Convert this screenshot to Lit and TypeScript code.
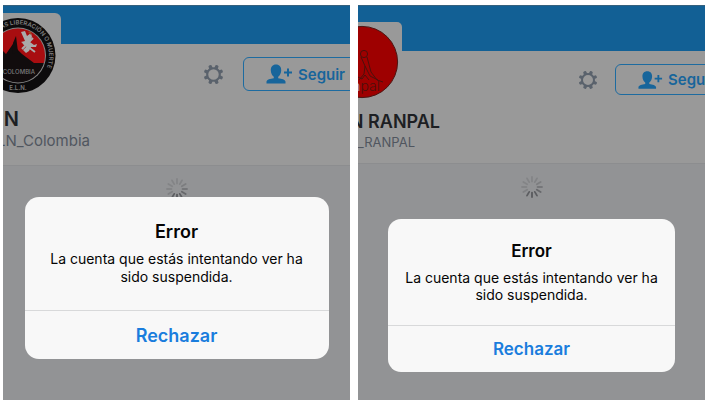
import { LitElement, html, svg, css } from "lit";
import { customElement, property } from "lit/decorators.js";

const gear = svg`
  <svg class="gear" viewBox="0 0 22 22" aria-hidden="true">
    <circle cx="11" cy="11" r="6.6" fill="none" stroke="currentColor" stroke-width="2.2"/>
    ${Array.from({ length: 8 }, (_, i) => svg`
      <path d="M9 4.8 L9.4 1 Q11 0.2 12.6 1 L13 4.8Z" fill="currentColor"
        transform=${`rotate(${i * 45 + 22.5} 11 11)`}/>`)}
  </svg>`;

const addPerson = svg`
  <svg class="person" viewBox="0 0 27 20" aria-hidden="true">
    <path fill="currentColor" d="M10 0.5C6.6 0.5 4.6 2.9 4.8 6.4C4.9 9.2 6.2 11.6 7.8 12.7V14.2C4.2 14.8 0.9 15.4 0.5 17.6V19.5H19.5V17.6C19.1 15.4 15.8 14.8 12.2 14.2V12.7C13.8 11.6 15.1 9.2 15.2 6.4C15.4 2.9 13.4 0.5 10 0.5Z"/>
    <path d="M18 8.5H26M22 4.5V12.5" fill="none" stroke="currentColor" stroke-width="2"/>
  </svg>`;

const shades = [0.2, 0.22, 0.3, 0.4, 0.6, 0.75, 0.8, 0.75, 0.25, 0.2, 0.2, 0.2];
const spinner = svg`
  <svg class="spinner" viewBox="0 0 24 24" aria-hidden="true">
    ${shades.map((o, i) => svg`
      <path d="M12 2V6.4" stroke="#4b4c50" stroke-width="1.8" stroke-linecap="round"
        opacity=${o} transform=${`rotate(${i * 30} 12 12)`}/>`)}
  </svg>`;

const emblem = svg`
  <svg class="logo" viewBox="0 0 58 84" role="img" aria-label="ELN Colombia">
    <defs>
      <clipPath id="disc"><circle cx="15" cy="42.5" r="27"/></clipPath>
      <path id="arc" d="M-7 20.5A31.1 31.1 0 1 1 15 73.6"/>
    </defs>
    <circle cx="15" cy="42.5" r="37.5" fill="#0c0b0c"/>
    <circle cx="15" cy="42.5" r="28" fill="#858585"/>
    <g clip-path="url(#disc)">
      <rect x="-15" y="10" width="60" height="40" fill="#a80d10"/>
      <path d="M-15 50L-2 36L3 41L12 28L14 36L19 41L31 50H45V75H-15Z" fill="#110c0d"/>
      <path d="M10 30L13 23L15 39L9 41Z" fill="#110c0d"/>
      <path d="M18 19L22 18L24 23L28 20L29 24L27 29L31 32L34 31L33 34L28 34L26 38L23 40L20 37L24 33L18 29L22 28Z" fill="#aaa"/>
      <path d="M30 25L19 36M20 30L32 39" stroke="#aaa" stroke-width="2"/>
      <path d="M25 19L28 18L28 22Z" fill="#9b4a20"/>
    </g>
    <text class="ring"><textPath href="#arc" startOffset="7">AS LIBERACIÓN O MUERTE</textPath></text>
    <text class="place" x="32" y="61" text-anchor="end">COLOMBIA</text>
    <text class="ring" x="15" y="77" text-anchor="middle">E.L.N.</text>
  </svg>`;

const redDisc = svg`
  <svg class="logo" viewBox="0 0 44 84" role="img" aria-label="Ranpal">
    <circle cx="4" cy="40" r="35.6" fill="#9e0000" stroke="#4c1512" stroke-width="1"/>
    <g fill="none" stroke="#4b100c" stroke-width="1">
      <circle cx="6" cy="32" r="3.6"/>
      <path d="M3 35L7 44L6 52L1 58M9 35L13 50L19 58L25 60M7 44L12 54L20 58M0 55L4 57L7 53L11 58"/>
    </g>
    <text x="22" y="69" class="mark" text-anchor="end"><tspan class="light">n</tspan>pal</text>
  </svg>`;

@customElement("profile-screen")
class ProfileScreen extends LitElement {
  @property() variant = "first";
  @property() name = "";
  @property() handle = "";

  static styles = css`
    :host { display: block; min-width: 0; }
    * { box-sizing: border-box; }
    .screen {
      --banner: 39px; --frame-w: 58px; --frame-top: 8px; --frame-r: 6px;
      --lead: 200px; --action-gap: 19px; --gear: 21px;
      --btn-h: 34px; --person: 27px;
      --name-w: 16px; --name-font: 20px; --name-top: 16px;
      --handle-w: 87px; --handle-font: 15px; --handle-line: 20px; --foot: 14px;
      --dialog-top: 192px; --dialog-w: 304px; --dialog-r: 14px;
      --title: 18px; --line: 18px; --act: 18px;
      --body-pad: 24px; --body-end: 24px; --act-h: 49px;
      position: relative; overflow: hidden; height: 100%;
      background: #929395; color: #1d1f23;
      font-family: Inter, "Liberation Sans", sans-serif;
    }
    .second {
      --banner: 46px; --frame-w: 44px; --frame-top: 17px; --frame-r: 5px;
      --lead: 220px; --action-gap: 17px; --gear: 20px;
      --btn-h: 31px; --person: 25px;
      --name-w: 82px; --name-font: 18px; --name-top: 15px;
      --handle-w: 57px; --handle-font: 13px; --handle-line: 16px; --foot: 13px;
      --dialog-top: 214px; --dialog-w: 287px; --dialog-r: 13px;
      --title: 17px; --line: 17px; --act: 17px;
      --body-pad: 21px; --body-end: 22px; --act-h: 47px;
    }
    .banner { height: var(--banner); background: #126095; border-top: 1px solid #35617e; }
    .avatar {
      position: absolute; left: 0; top: var(--frame-top);
      width: var(--frame-w); height: 84px; overflow: hidden;
      background: #999; border-top-right-radius: var(--frame-r);
    }
    .logo { display: block; width: 100%; height: 84px; }
    .ring { font-size: 6px; font-weight: 600; fill: #7d7d7d; }
    .place { font-size: 6px; font-weight: 500; fill: #7d7d7d; }
    .mark { font-size: 14px; font-weight: 300; fill: #4b100c; }
    .light { fill: #b9a3a3; }
    .profile { background: #999; padding: 13px 0 var(--foot); border-bottom: 1px solid #8c8d8f; }
    .actions { display: flex; align-items: center; gap: var(--action-gap); padding-left: var(--lead); }
    .icon-btn { flex: none; padding: 0; border: 0; background: none; color: #5a626c; line-height: 0; }
    .gear { width: var(--gear); height: var(--gear); }
    .follow {
      flex: none; display: flex; align-items: center; gap: 5px;
      height: var(--btn-h); padding: 0 22px; white-space: nowrap;
      border: 1px solid #1d6ba0; border-radius: 6px; background: none;
      color: #17659b; font: 600 15px Inter, "Liberation Sans", sans-serif;
    }
    .person { width: var(--person); height: 20px; }
    .name, .handle { display: flex; justify-content: flex-end; overflow: hidden; margin: 0; white-space: nowrap; }
    .name { width: var(--name-w); margin-top: var(--name-top); font-size: var(--name-font); font-weight: 600; line-height: 24px; }
    .handle { width: var(--handle-w); font-size: var(--handle-font); line-height: var(--handle-line); color: #50565f; }
    .loading { display: flex; justify-content: center; padding-top: 11px; }
    .spinner { width: 24px; height: 24px; }
    .overlay { position: absolute; inset: 0; display: flex; justify-content: center; align-items: flex-start; padding-top: var(--dialog-top); }
    .dialog { width: var(--dialog-w); border-radius: var(--dialog-r); background: #f8f8f8; overflow: hidden; color: #050505; text-align: center; }
    .message { padding: var(--body-pad) 16px var(--body-end); }
    .title { margin: 0 0 7px; font-size: var(--title); font-weight: 600; line-height: 22px; }
    .copy { margin: 0; font-size: 14px; line-height: var(--line); }
    .dismiss {
      display: block; width: 100%; height: var(--act-h); padding: 0;
      border: 0; border-top: 1px solid #d8d9da; background: none; color: #1a7ddd;
      font: 600 var(--act) Inter, "Liberation Sans", sans-serif;
    }
  `;

  render() {
    return html`
      <section class="screen ${this.variant}">
        <div class="banner"></div>
        <div class="profile">
          <div class="actions">
            <button class="icon-btn" aria-label="Ajustes">${gear}</button>
            <button class="follow">${addPerson}<span>Seguir</span></button>
          </div>
          <h1 class="name">${this.name}</h1>
          <p class="handle">${this.handle}</p>
        </div>
        <div class="avatar">${this.variant === "first" ? emblem : redDisc}</div>
        <div class="loading">${spinner}</div>
        <div class="overlay">
          <div class="dialog" role="alertdialog" aria-labelledby="title" aria-describedby="copy">
            <div class="message">
              <h2 class="title" id="title">Error</h2>
              <p class="copy" id="copy">La cuenta que estás intentando ver ha sido suspendida.</p>
            </div>
            <button class="dismiss">Rechazar</button>
          </div>
        </div>
      </section>`;
  }
}

@customElement("app-root")
class AppRoot extends LitElement {
  static styles = css`
    :host { display: block; min-height: 100vh; background: #fff; }
    .page {
      box-sizing: border-box; display: grid; grid-template-columns: 1fr 1fr; gap: 8px;
      min-height: 100vh; padding: 5px 1px 4px 3px;
    }
  `;

  render() {
    return html`
      <main class="page">
        <profile-screen variant="first" name="N" handle="LN_Colombia"></profile-screen>
        <profile-screen variant="second" name="N RANPAL" handle="N_RANPAL"></profile-screen>
      </main>`;
  }
}
